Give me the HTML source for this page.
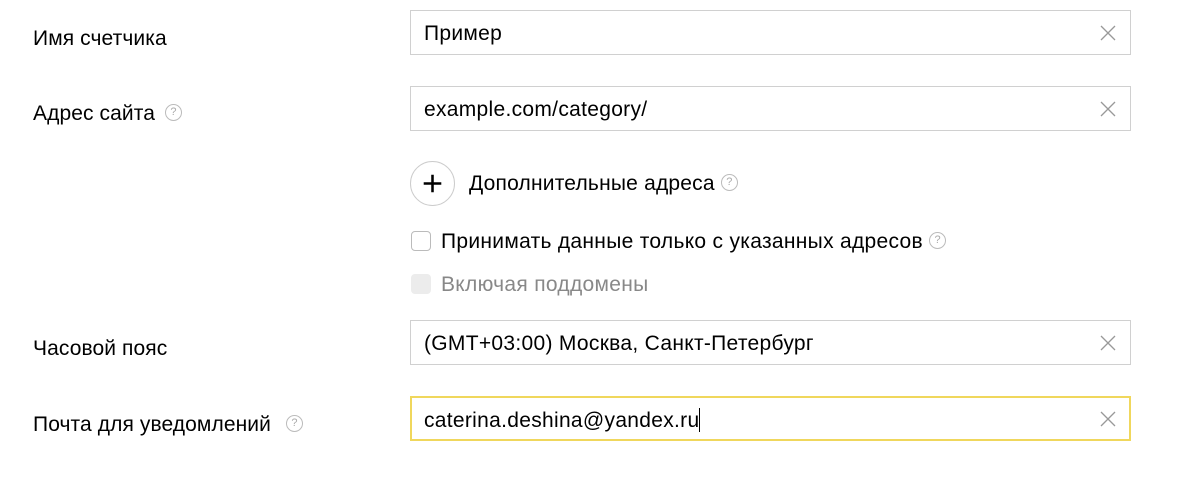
<!DOCTYPE html>
<html><head><meta charset="utf-8"><style>
body{margin:0;width:1200px;height:487px;background:#fff;font-family:"Liberation Sans",sans-serif;color:#000;position:relative;overflow:hidden}
.a{position:absolute;white-space:nowrap}
.lbl{font-size:21px;left:33px;letter-spacing:0.1px}
.inp{position:absolute;left:410px;width:719px;height:43px;border:1px solid #d0d0d0;box-sizing:content-box}
.inp span{position:absolute;left:13px;top:11px;font-size:21px;letter-spacing:0.3px;white-space:nowrap}
.x{position:absolute;right:14px;top:14px;width:16px;height:16px}
.q{display:inline-block;width:17px;height:17px;border:1px solid #bbb;border-radius:50%;box-sizing:border-box;font-size:11px;color:#aaa;text-align:center;line-height:15px;vertical-align:middle;letter-spacing:0}
.cb{position:absolute;width:20px;height:20px;border:1px solid #bbb;border-radius:4px;box-sizing:border-box}
</style></head><body>
<div class="a lbl" style="top:27px">Имя счетчика</div>
<div class="inp" style="top:10px"><span>Пример</span><svg class="x" viewBox="0 0 16 16"><path d="M1 1L15 15M15 1L1 15" stroke="#999" stroke-width="1.3"/></svg></div>
<div class="a lbl" style="top:102px">Адрес сайта <span class="q" style="margin-left:4px;margin-top:-3px">?</span></div>
<div class="inp" style="top:86px"><span>example.com/category/</span><svg class="x" viewBox="0 0 16 16"><path d="M1 1L15 15M15 1L1 15" stroke="#999" stroke-width="1.3"/></svg></div>
<div class="a" style="left:410px;top:161px;width:45px;height:45px;border:1px solid #ccc;border-radius:50%;box-sizing:border-box"><svg viewBox="0 0 44 44" width="43" height="43"><path d="M22 13V31M13 22H31" stroke="#000" stroke-width="2.6"/></svg></div>
<div class="a" style="left:469px;top:172px;font-size:21px;letter-spacing:0.2px">Дополнительные адреса <span class="q" style="margin-left:0px;margin-top:-3px">?</span></div>
<div class="cb" style="left:411px;top:231px"></div>
<div class="a" style="left:441px;top:230px;font-size:21px;letter-spacing:0.3px">Принимать данные только с указанных адресов <span class="q" style="margin-left:0px;margin-top:-3px">?</span></div>
<div class="cb" style="left:411px;top:274px;background:#ececec;border-color:#ececec"></div>
<div class="a" style="left:441px;top:273px;font-size:21px;color:#888;letter-spacing:0.3px">Включая поддомены</div>
<div class="a lbl" style="top:337px">Часовой пояс</div>
<div class="inp" style="top:320px"><span>(GMT+03:00) Москва, Санкт-Петербург</span><svg class="x" viewBox="0 0 16 16"><path d="M1 1L15 15M15 1L1 15" stroke="#999" stroke-width="1.3"/></svg></div>
<div class="a lbl" style="top:413px">Почта для уведомлений <span class="q" style="margin-left:9px;margin-top:-3px">?</span></div>
<div class="inp" style="top:396px;border:2px solid #f0d75c;width:717px;height:41px"><span style="left:12px;top:10px">caterina.deshina@yandex.ru<span style="display:inline-block;width:1px;height:24px;background:#000;vertical-align:-5px;position:static"></span></span><svg class="x" viewBox="0 0 16 16" style="right:13px;top:13px"><path d="M1 1L15 15M15 1L1 15" stroke="#999" stroke-width="1.3"/></svg></div>
</body></html>
